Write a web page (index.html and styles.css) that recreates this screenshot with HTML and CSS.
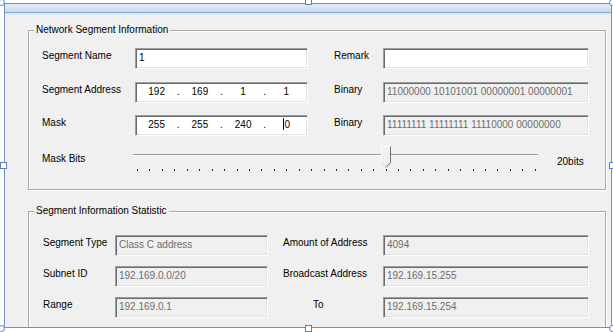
FILE: index.html
```html
<!DOCTYPE html>
<html>
<head>
<meta charset="utf-8">
<link rel="stylesheet" href="styles.css">
</head>
<body>
<div class="frame">
  <div class="titlebar"></div>
  <div class="client">
    <fieldset class="group g1">
      <legend>Network Segment Information</legend>
      <div class="grid grid1">
        <span class="lbl">Segment Name</span>
        <div class="box">1</div>
        <span class="lbl lbl2">Remark</span>
        <div class="box"></div>

        <span class="lbl">Segment Address</span>
        <div class="box ip"><span class="oct">192</span><span class="dot">.</span><span class="oct">169</span><span class="dot">.</span><span class="oct">1</span><span class="dot">.</span><span class="oct">1</span></div>
        <span class="lbl lbl2">Binary</span>
        <div class="box dis">11000000 10101001 00000001 00000001</div>

        <span class="lbl">Mask</span>
        <div class="box ip"><span class="oct">255</span><span class="dot">.</span><span class="oct">255</span><span class="dot">.</span><span class="oct">240</span><span class="dot">.</span><span class="oct"><span class="caret"></span>0</span></div>
        <span class="lbl lbl2">Binary</span>
        <div class="box dis">11111111 11111111 11110000 00000000</div>
      </div>
      <div class="slider-row">
        <span class="lbl slbl">Mask Bits</span>
        <svg class="track" width="407" height="30" viewBox="0 0 407 30">
          <line x1="0" y1="9.5" x2="405" y2="9.5" stroke="#9a9a9a" stroke-width="1"/>
          <line x1="0" y1="10.5" x2="405" y2="10.5" stroke="#ffffff" stroke-width="1"/>
          <g fill="#2a2a2a">
            <rect x="4" y="24" width="1" height="2"/><rect x="16" y="24" width="1" height="2"/><rect x="29" y="24" width="1" height="2"/><rect x="41" y="24" width="1" height="2"/><rect x="54" y="24" width="1" height="2"/><rect x="66" y="24" width="1" height="2"/><rect x="79" y="24" width="1" height="2"/><rect x="91" y="24" width="1" height="2"/><rect x="104" y="24" width="1" height="2"/><rect x="116" y="24" width="1" height="2"/><rect x="128" y="24" width="1" height="2"/><rect x="141" y="24" width="1" height="2"/><rect x="153" y="24" width="1" height="2"/><rect x="166" y="24" width="1" height="2"/><rect x="178" y="24" width="1" height="2"/><rect x="191" y="24" width="1" height="2"/><rect x="203" y="24" width="1" height="2"/><rect x="215" y="24" width="1" height="2"/><rect x="228" y="24" width="1" height="2"/><rect x="240" y="24" width="1" height="2"/><rect x="253" y="24" width="1" height="2"/><rect x="265" y="24" width="1" height="2"/><rect x="277" y="24" width="1" height="2"/><rect x="290" y="24" width="1" height="2"/><rect x="302" y="24" width="1" height="2"/><rect x="315" y="24" width="1" height="2"/><rect x="327" y="24" width="1" height="2"/><rect x="340" y="24" width="1" height="2"/><rect x="352" y="24" width="1" height="2"/><rect x="364" y="24" width="1" height="2"/><rect x="377" y="24" width="1" height="2"/><rect x="389" y="24" width="1" height="2"/><rect x="402" y="24" width="1" height="2"/>
          </g>
          <path d="M248.5 1.5 H257.5 V17.5 L253 22.5 L248.5 17.5 Z" fill="#f0f0f0" stroke="none"/>
          <path d="M248.5 17.5 V1.5 H257" fill="none" stroke="#ffffff" stroke-width="1"/>
          <path d="M257.5 1.5 V17.5 L253 22.5" fill="none" stroke="#6e6e6e" stroke-width="1"/>
          <path d="M253 22.5 L248.5 17.5" fill="none" stroke="#d8d8d8" stroke-width="1"/>
        </svg>
        <span class="lbl bits">20bits</span>
      </div>
    </fieldset>

    <fieldset class="group g2">
      <legend>Segment Information Statistic</legend>
      <div class="grid grid2">
        <span class="lbl">Segment Type</span>
        <div class="box dis">Class C address</div>
        <span class="lbl lbl2">Amount of Address</span>
        <div class="box dis">4094</div>

        <span class="lbl">Subnet ID</span>
        <div class="box dis">192.169.0.0/20</div>
        <span class="lbl lbl2">Broadcast Address</span>
        <div class="box dis">192.169.15.255</div>

        <span class="lbl">Range</span>
        <div class="box dis">192.169.0.1</div>
        <span class="lbl lbl2 to">To</span>
        <div class="box dis">192.169.15.254</div>
      </div>
    </fieldset>
  </div>
</div>

<span class="handle round h-tl"></span>
<span class="handle h-tm"></span>
<span class="handle round h-tr"></span>
<span class="handle h-ml"></span>
<span class="handle h-mr"></span>
<span class="handle round h-bl"></span>
<span class="handle h-bm"></span>
<span class="handle round h-br"></span>
</body>
</html>
```

FILE: styles.css
```css
* { box-sizing: border-box; }

body {
  margin: 0;
  width: 613px;
  height: 332px;
  overflow: hidden;
  position: relative;
  background: #ffffff;
  font-family: "Liberation Sans", Arial, sans-serif;
  font-size: 10px;
  color: #000;
}

.frame {
  margin: 3px 0 0 4px;
  width: 608px;
  height: 325px;
  border: 1px solid #7391b8;
  overflow: hidden;
  background: #f0f0f0;
}

.titlebar {
  height: 9px;
  background: linear-gradient(#e3ecf8, #c7d9ef);
  border-bottom: 1px solid #8ea8cb;
}

.client {
  border-top: 2px solid #dce6f2;
  padding: 9px 0 0 23px;
}

.group {
  margin: 0;
  padding: 0;
  width: 578px;
  border: 1px solid #a8a8a8;
  box-shadow: inset 1px 1px 0 #ffffff, 1px 1px 0 #ffffff;
  min-inline-size: 0;
}

.group legend {
  margin-left: 5px;
  padding: 0 2px;
  line-height: 12px;
  font-size: 10px;
  background: #f0f0f0;
}

.g1 { padding-bottom: 14px; }
.g2 { margin-top: 15px; padding-bottom: 30px; }

.grid {
  display: grid;
  grid-auto-rows: 21px;
}

.grid1 {
  grid-template-columns: 93px 173px 75px 206px;
  row-gap: 12.5px;
  padding-left: 13px;
  margin-top: 12px;
}

.grid2 {
  grid-template-columns: 72px 153px 115px 206px;
  row-gap: 10px;
  padding-left: 14px;
  margin-top: 18px;
}

.lbl {
  line-height: 12px;
  padding-top: 2px;
  white-space: nowrap;
}

.grid1 .lbl2 { padding-left: 26px; }
.grid2 .lbl2 { padding-left: 15px; }
.grid2 .to { padding-left: 45px; }

.box {
  border: 1px solid;
  border-color: #9e9e9e #ffffff #ffffff #9e9e9e;
  box-shadow: inset 1px 1px 0 #6b6b6b, inset -1px -1px 0 #e3e3e3;
  background: #ffffff;
  padding: 0 3px;
  line-height: 18px;
  white-space: nowrap;
  overflow: hidden;
}

.box.dis {
  background: #f0f0f0;
  color: #6d6d6d;
}

.box.ip {
  display: flex;
  padding: 0 2px;
}

.oct {
  flex: 1;
  text-align: center;
}

.dot {
  width: 6px;
  text-align: center;
}

.caret {
  display: inline-block;
  width: 1px;
  height: 12px;
  background: #000;
  vertical-align: -2px;
  margin-right: 1px;
}

.slider-row {
  display: flex;
  height: 30px;
  margin-top: 9px;
  padding-left: 13px;
}

.slbl {
  width: 91px;
  padding-top: 8px;
}

.track { display: block; flex: none; }

.bits {
  margin-left: 17px;
  padding-top: 11px;
}

.handle {
  position: absolute;
  width: 7px;
  height: 7px;
  background: #ffffff;
  border: 1px solid #5f80aa;
}

.handle.round { border-radius: 50%; }

.h-tl { left: -2px; top: -1px; }
.h-tm { left: 305px; top: -2px; }
.h-tr { left: 609px; top: -1px; }
.h-ml { left: 0px; top: 162px; }
.h-mr { left: 609px; top: 162px; }
.h-bl { left: -2px; top: 325px; }
.h-bm { left: 305px; top: 325px; }
.h-br { left: 609px; top: 325px; }
```
